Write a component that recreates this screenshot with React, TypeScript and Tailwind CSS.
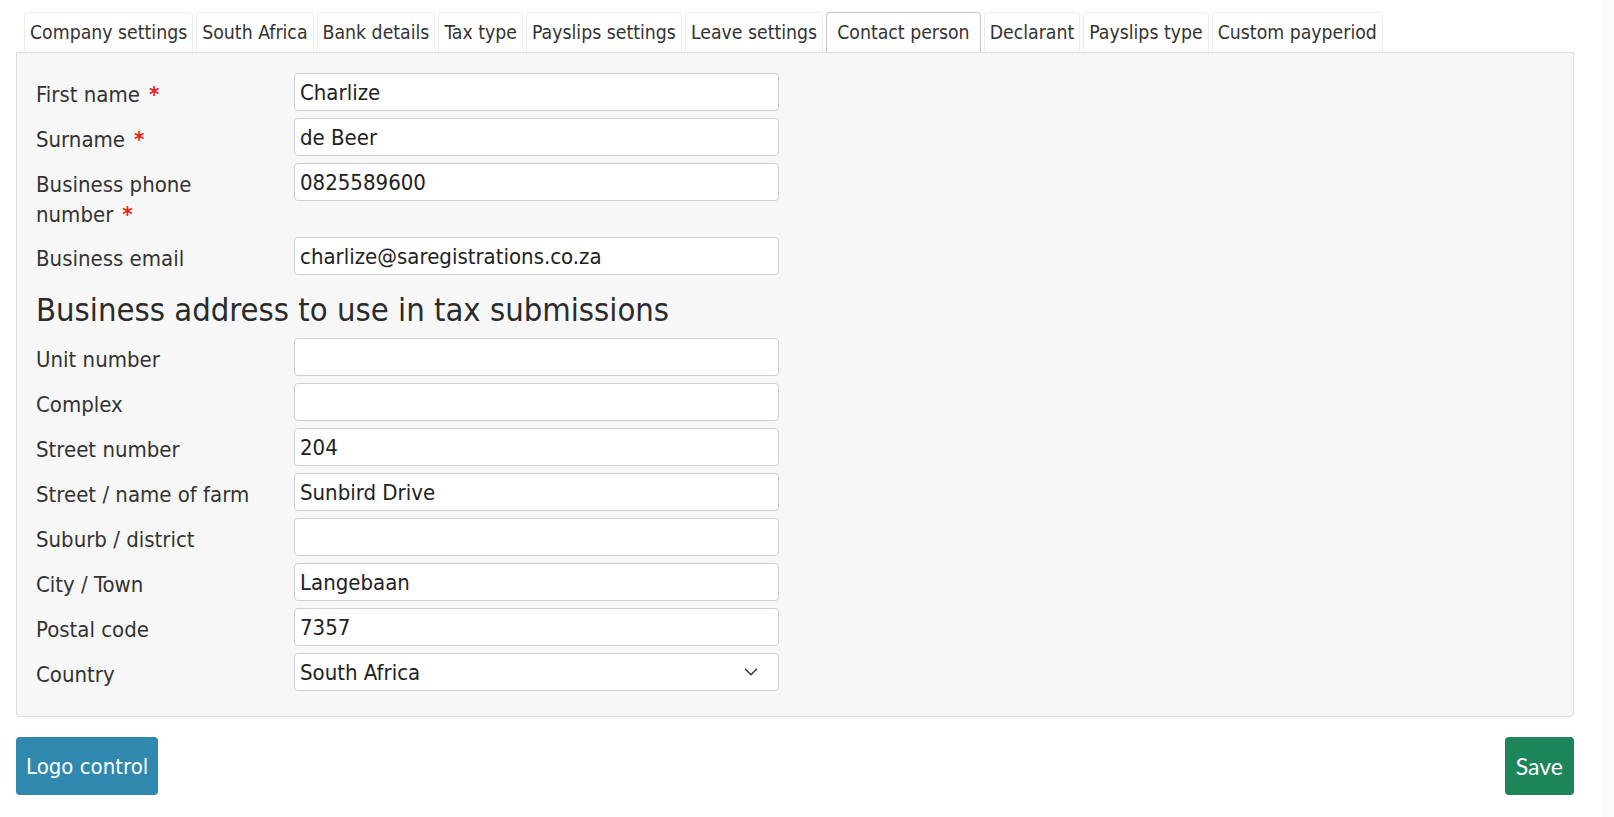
import React from 'react';
import { ChevronDown } from 'lucide-react';

const tabs = [
  'Company settings',
  'South Africa',
  'Bank details',
  'Tax type',
  'Payslips settings',
  'Leave settings',
  'Contact person',
  'Declarant',
  'Payslips type',
  'Custom payperiod',
];

const contactFields = [
  { label: 'First name', value: 'Charlize', required: true },
  { label: 'Surname', value: 'de Beer', required: true },
  { label: 'Business phone number', value: '0825589600', required: true },
  { label: 'Business email', value: 'charlize@saregistrations.co.za' },
];

const addressFields = [
  { label: 'Unit number', value: '' },
  { label: 'Complex', value: '' },
  { label: 'Street number', value: '204' },
  { label: 'Street / name of farm', value: 'Sunbird Drive' },
  { label: 'Suburb / district', value: '' },
  { label: 'City / Town', value: 'Langebaan' },
  { label: 'Postal code', value: '7357' },
];

const Row = ({ label, value, required }: { label: string; value: string; required?: boolean }) => (
  <div className="flex items-start">
    <label className="w-[258px] shrink-0 pr-[24px] pt-[7px] leading-[30px]">
      {label}
      {required && <span className="ml-[9px] font-bold text-[#e8221b]">*</span>}
    </label>
    <input
      type="text"
      defaultValue={value}
      className="h-[38px] w-[485px] rounded-[4px] border border-[#cfcfcf] bg-white px-[5px] text-[#222] outline-none"
    />
  </div>
);

export default function App() {
  const font = { fontFamily: '"DejaVu Sans Condensed", "DejaVu Sans", sans-serif' };

  return (
    <div className="flex min-h-[817px] bg-white text-[22px] text-[#333]" style={font}>
      <div className="flex-1 pl-[16px] pr-[29px] pt-[12px]">
        <div className="flex gap-[3px] pl-[8px] text-[19.3px]">
          {tabs.map((t) => {
            const active = t === 'Contact person';
            return (
              <div
                key={t}
                className={`flex h-[40px] items-center rounded-t-[4px] border border-b-0 pt-[1px] ${
                  active ? 'border-[#c8c8c8] bg-white px-[10px]' : 'border-[#ececec] bg-white px-[5px]'
                }`}
              >
                {t}
              </div>
            );
          })}
        </div>

        <div className="rounded-b-[4px] border border-[#dcdcdc] bg-[#f7f7f7] px-[19px] pb-[25px] pt-[20px]">
          <div className="flex flex-col gap-[7px]">
            {contactFields.map((f) => (
              <Row key={f.label} {...f} />
            ))}

            <h3 className="mb-[3px] mt-[10px] text-[32.5px] leading-[36px] text-[#2b2b2b]">
              Business address to use in tax submissions
            </h3>

            {addressFields.map((f) => (
              <Row key={f.label} {...f} />
            ))}

            <div className="flex items-start">
              <label className="w-[258px] shrink-0 pr-[24px] pt-[7px] leading-[30px]">Country</label>
              <div className="flex h-[38px] w-[485px] items-center justify-between rounded-[4px] border border-[#cfcfcf] bg-white pl-[5px] pr-[16px] text-[#222]">
                <span>South Africa</span>
                <ChevronDown size={22} strokeWidth={1.6} className="text-[#333]" />
              </div>
            </div>
          </div>
        </div>

        <div className="mt-[20px] flex justify-between">
          <button className="h-[58px] rounded-[4px] bg-[#2f88ad] px-[10px] text-white">Logo control</button>
          <button
            className="h-[58px] rounded-[4px] bg-[#1d855a] px-[11px] text-[23px] text-white"
            style={{ fontFamily: 'Lato, sans-serif' }}
          >
            Save
          </button>
        </div>
      </div>
      <div className="w-[11px] shrink-0 bg-[#fafafa]" />
    </div>
  );
}
